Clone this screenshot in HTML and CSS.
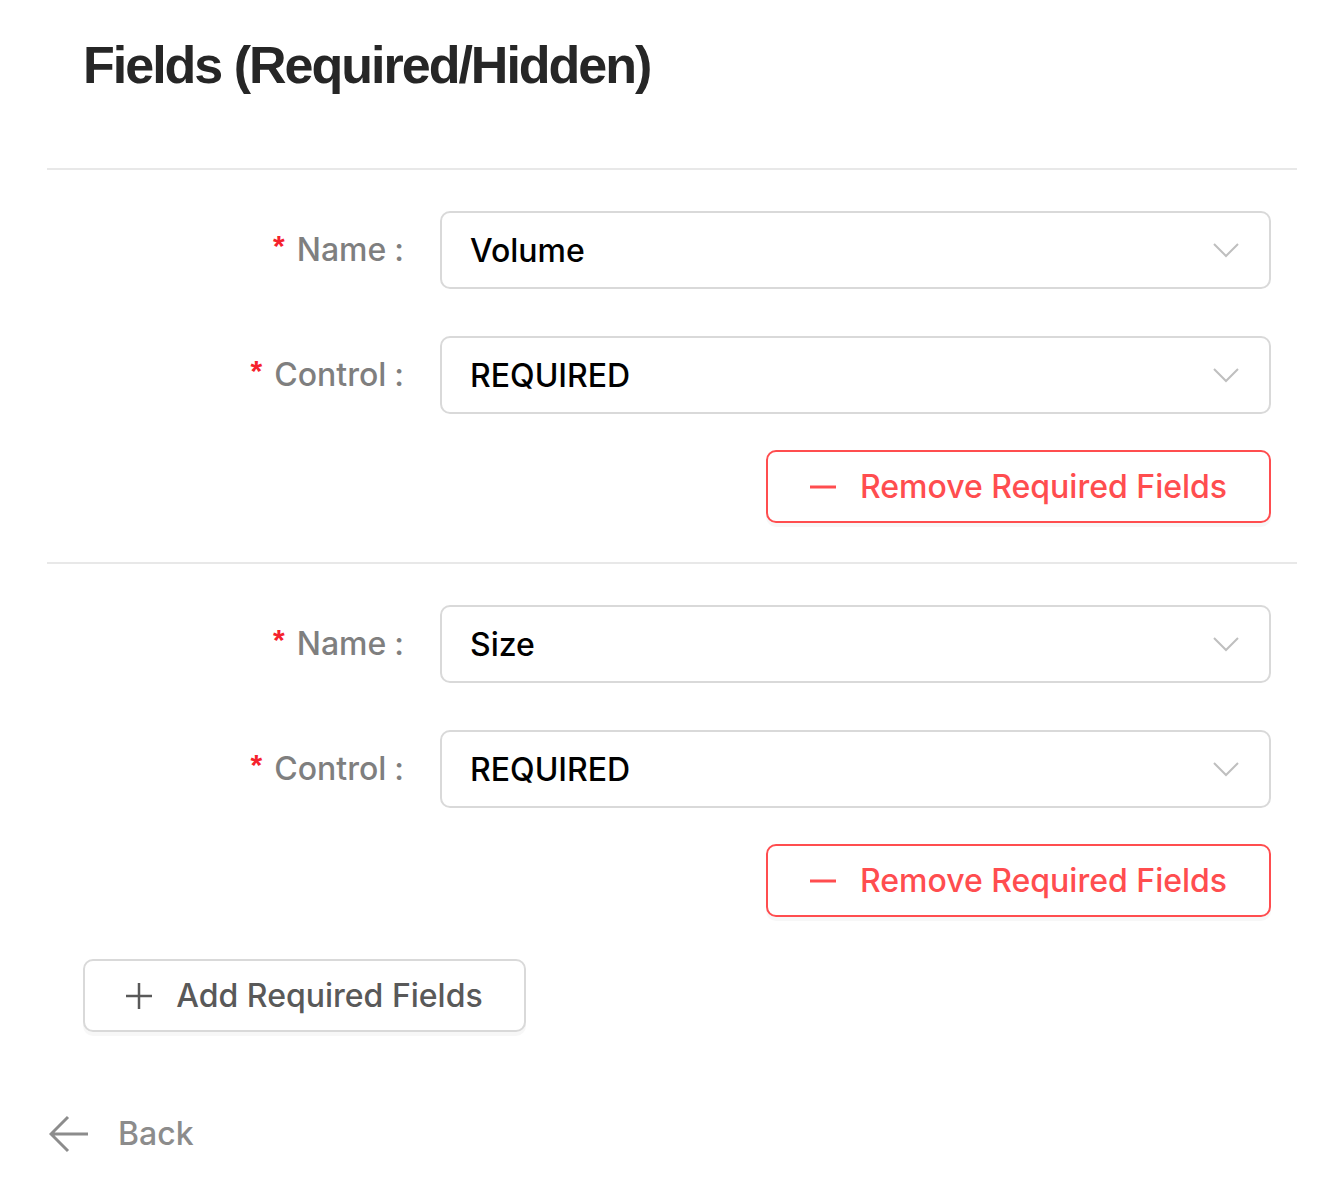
FILE: index.html
```html
<!DOCTYPE html>
<html lang="en">
<head>
<meta charset="utf-8">
<title>Fields (Required/Hidden)</title>
<link rel="stylesheet" href="styles.css">
</head>
<body>
<div class="page">
  <h1 class="title">Fields (Required/Hidden)</h1>

  <div class="group">
    <div class="form-item">
      <label class="label"><span class="req">*</span><span class="label-text">Name</span><span class="colon">:</span></label>
      <div class="select">
        <span class="select-value">Volume</span>
        <svg class="chevron" width="26" height="16" viewBox="0 0 26 16"><polyline points="1,2 13,14 25,2" fill="none" stroke="#bfbfbf" stroke-width="2"/></svg>
      </div>
    </div>
    <div class="form-item">
      <label class="label"><span class="req">*</span><span class="label-text">Control</span><span class="colon">:</span></label>
      <div class="select">
        <span class="select-value">REQUIRED</span>
        <svg class="chevron" width="26" height="16" viewBox="0 0 26 16"><polyline points="1,2 13,14 25,2" fill="none" stroke="#bfbfbf" stroke-width="2"/></svg>
      </div>
    </div>
    <div class="actions">
      <button class="btn btn-danger" type="button">
        <svg width="26" height="4" viewBox="0 0 26 4"><line x1="0" y1="2" x2="26" y2="2" stroke="#ff4d4f" stroke-width="3"/></svg>
        <span>Remove Required Fields</span>
      </button>
    </div>
  </div>

  <div class="group">
    <div class="form-item">
      <label class="label"><span class="req">*</span><span class="label-text">Name</span><span class="colon">:</span></label>
      <div class="select">
        <span class="select-value">Size</span>
        <svg class="chevron" width="26" height="16" viewBox="0 0 26 16"><polyline points="1,2 13,14 25,2" fill="none" stroke="#bfbfbf" stroke-width="2"/></svg>
      </div>
    </div>
    <div class="form-item">
      <label class="label"><span class="req">*</span><span class="label-text">Control</span><span class="colon">:</span></label>
      <div class="select">
        <span class="select-value">REQUIRED</span>
        <svg class="chevron" width="26" height="16" viewBox="0 0 26 16"><polyline points="1,2 13,14 25,2" fill="none" stroke="#bfbfbf" stroke-width="2"/></svg>
      </div>
    </div>
    <div class="actions">
      <button class="btn btn-danger" type="button">
        <svg width="26" height="4" viewBox="0 0 26 4"><line x1="0" y1="2" x2="26" y2="2" stroke="#ff4d4f" stroke-width="3"/></svg>
        <span>Remove Required Fields</span>
      </button>
    </div>
  </div>

  <div class="add-row">
    <button class="btn btn-default" type="button">
      <svg width="26" height="26" viewBox="0 0 26 26"><line x1="0" y1="13" x2="26" y2="13" stroke="#595959" stroke-width="2.5"/><line x1="13" y1="0" x2="13" y2="26" stroke="#595959" stroke-width="2.5"/></svg>
      <span>Add Required Fields</span>
    </button>
  </div>

  <div class="back-row">
    <svg width="40" height="38" viewBox="0 0 40 38"><path d="M39 19 H3 M19 2 L2 19 L19 36" fill="none" stroke="#8c8c8c" stroke-width="3"/></svg>
    <span class="back-text">Back</span>
  </div>
</div>
</body>
</html>
```

FILE: styles.css
```css
* {
  box-sizing: border-box;
}

html, body {
  margin: 0;
  padding: 0;
  background: #ffffff;
}

body {
  font-family: Inter, "Noto Sans", "Liberation Sans", sans-serif;
  color: #000000;
}

.page {
  width: 1250px;
  margin-left: 47px;
  padding-top: 33px;
}

.title {
  margin: 0 0 71px 36px;
  font-family: "Liberation Sans", Arial, sans-serif;
  font-weight: 700;
  font-size: 52px;
  line-height: 64px;
  letter-spacing: -2px;
  color: #262626;
}

.group {
  border-top: 2px solid #e8e8e8;
  padding: 41px 26px 39px 0;
}

.form-item {
  display: grid;
  grid-template-columns: 393px 1fr;
  align-items: center;
  margin-bottom: 47px;
}

.form-item + .form-item {
  margin-bottom: 36px;
}

.label {
  display: flex;
  justify-content: flex-end;
  align-items: center;
  padding-right: 36px;
  font-size: 32px;
  font-weight: 500;
  line-height: 40px;
  color: #7f7f7f;
}

.req {
  color: #f5222d;
  font-size: 30px;
  font-weight: 700;
  line-height: 28px;
  margin-right: 12px;
  position: relative;
  top: -4px;
  font-family: "Liberation Sans", sans-serif;
}

.colon {
  margin-left: 8px;
}

.select {
  height: 78px;
  border: 2px solid #d9d9d9;
  border-radius: 10px;
  display: flex;
  align-items: center;
  justify-content: space-between;
  padding: 0 30px 0 28px;
  font-size: 32px;
  font-weight: 500;
  color: #000000;
}

.chevron {
  display: block;
}

.actions {
  display: flex;
  justify-content: flex-end;
}

.btn {
  display: flex;
  align-items: center;
  gap: 24px;
  height: 73px;
  padding: 0 38px;
  border-radius: 10px;
  background: #ffffff;
  font-family: Inter, "Noto Sans", sans-serif;
  font-size: 32px;
  font-weight: 500;
  cursor: pointer;
  box-shadow: 0 4px 0 rgba(0, 0, 0, 0.03);
}

.btn svg {
  display: block;
}

.btn-danger {
  width: 505px;
  justify-content: center;
  border: 2px solid #ff4d4f;
  color: #ff4d4f;
}

.btn-default {
  width: 443px;
  justify-content: center;
  border: 2px solid #d9d9d9;
  color: #595959;
}

.add-row {
  padding-left: 36px;
  margin-top: 3px;
}

.back-row {
  display: flex;
  align-items: center;
  gap: 29px;
  margin-top: 82px;
  margin-left: 2px;
}

.back-row svg {
  display: block;
}

.back-text {
  font-size: 32px;
  font-weight: 500;
  line-height: 40px;
  color: #8c8c8c;
}
```
